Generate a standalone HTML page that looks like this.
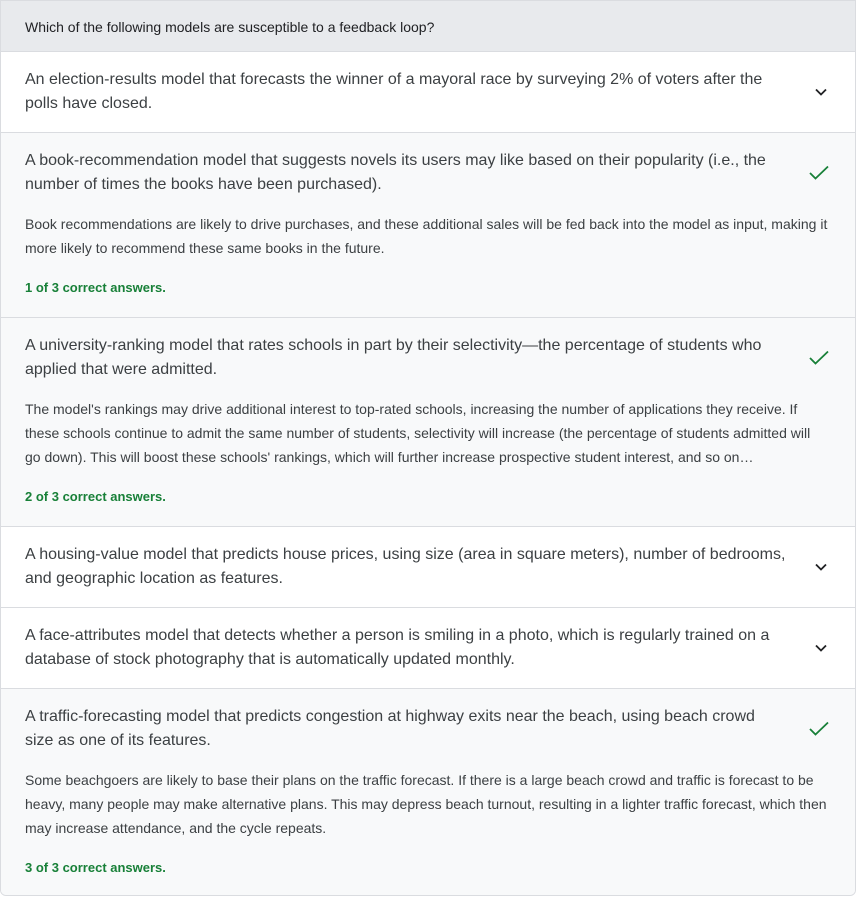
<!DOCTYPE html>
<html><head><meta charset="utf-8"><style>
*{margin:0;padding:0;box-sizing:border-box}
body{width:862px;height:897px;background:#fff;font-family:"Liberation Sans",Arial,sans-serif;color:#202124;overflow:hidden}
.box{position:absolute;left:0;top:0;width:856px;height:896px;border:1px solid #dadce0;border-radius:0 0 6px 6px;overflow:hidden}
.hd{height:51px;background:#e8eaed;border-bottom:1px solid #dadce0;padding:16px 24px 0;font-size:14px;line-height:20px;color:#202124}
.row{position:relative;border-bottom:1px solid #dadce0;padding:16px 60px 16px 24px}
.row:last-child{border-bottom:none}
.row.ok{background:#f8f9fa;padding-bottom:18px}
.opt{font-size:16px;line-height:24px;white-space:nowrap;color:#3c4043}
.ex{font-size:14px;line-height:24px;white-space:nowrap;color:#3c4043;margin-top:15px;margin-right:-40px}
.cr{font-size:13px;line-height:24px;color:#188038;margin-top:16px;font-weight:bold}
.ic{position:absolute;right:26px;top:50%;margin-top:-8px}
.ok .ic{top:32px;margin-top:0}
</style></head><body><div class="box">
<div class="hd">Which of the following models are susceptible to a feedback loop?</div>
<div class="row" style="height:81px"><div class="opt">An election-results model that forecasts the winner of a mayoral race by surveying 2% of voters after the<br>polls have closed.</div><svg class="ic" width="16" height="16" viewBox="0 0 16 16"><path d="M3 5.5l5 5 5-5" fill="none" stroke="#202124" stroke-width="1.8"/></svg></div>
<div class="row ok" style="height:185px"><div class="opt">A book-recommendation model that suggests novels its users may like based on their popularity (i.e., the<br>number of times the books have been purchased).</div><div class="ex">Book recommendations are likely to drive purchases, and these additional sales will be fed back into the model as input, making it<br>more likely to recommend these same books in the future.</div><div class="cr">1 of 3 correct answers.</div><svg class="ic" width="20" height="16" viewBox="0 0 20 16"><path d="M1 8l5.5 5.5L19 1.5" fill="none" stroke="#188038" stroke-width="1.8"/></svg></div>
<div class="row ok" style="height:209px"><div class="opt">A university-ranking model that rates schools in part by their selectivity—the percentage of students who<br>applied that were admitted.</div><div class="ex">The model's rankings may drive additional interest to top-rated schools, increasing the number of applications they receive. If<br>these schools continue to admit the same number of students, selectivity will increase (the percentage of students admitted will<br>go down). This will boost these schools' rankings, which will further increase prospective student interest, and so on…</div><div class="cr">2 of 3 correct answers.</div><svg class="ic" width="20" height="16" viewBox="0 0 20 16"><path d="M1 8l5.5 5.5L19 1.5" fill="none" stroke="#188038" stroke-width="1.8"/></svg></div>
<div class="row" style="height:81px"><div class="opt">A housing-value model that predicts house prices, using size (area in square meters), number of bedrooms,<br>and geographic location as features.</div><svg class="ic" width="16" height="16" viewBox="0 0 16 16"><path d="M3 5.5l5 5 5-5" fill="none" stroke="#202124" stroke-width="1.8"/></svg></div>
<div class="row" style="height:81px"><div class="opt">A face-attributes model that detects whether a person is smiling in a photo, which is regularly trained on a<br>database of stock photography that is automatically updated monthly.</div><svg class="ic" width="16" height="16" viewBox="0 0 16 16"><path d="M3 5.5l5 5 5-5" fill="none" stroke="#202124" stroke-width="1.8"/></svg></div>
<div class="row ok" style="height:208px"><div class="opt">A traffic-forecasting model that predicts congestion at highway exits near the beach, using beach crowd<br>size as one of its features.</div><div class="ex">Some beachgoers are likely to base their plans on the traffic forecast. If there is a large beach crowd and traffic is forecast to be<br>heavy, many people may make alternative plans. This may depress beach turnout, resulting in a lighter traffic forecast, which then<br>may increase attendance, and the cycle repeats.</div><div class="cr">3 of 3 correct answers.</div><svg class="ic" width="20" height="16" viewBox="0 0 20 16"><path d="M1 8l5.5 5.5L19 1.5" fill="none" stroke="#188038" stroke-width="1.8"/></svg></div>
</div></body></html>
